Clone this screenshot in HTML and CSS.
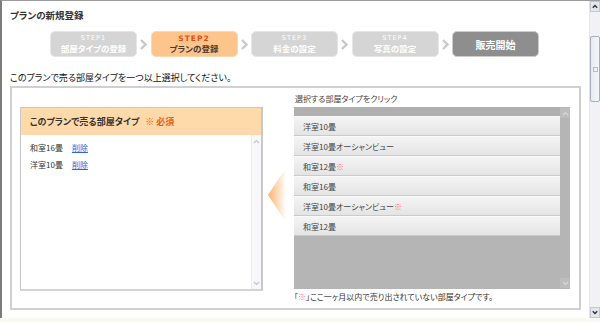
FILE: index.html
```html
<!DOCTYPE html>
<html lang="ja">
<head>
    <meta charset="UTF-8">
    <title>プランの新規登録</title>
    <link rel="stylesheet" href="styles.css">
</head>
<body>

    <div class="frame">
        <div class="page">
            <h1 class="title">プランの新規登録</h1>

            <ol class="steps">
                <li class="step">
                    <span class="step-no">STEP1</span>
                    <span class="step-name">部屋タイプの登録</span>
                </li>
                <li class="chev"><svg width="7" height="11" viewBox="0 0 7 11"><polyline points="1,1 5.5,5.5 1,10" fill="none" stroke="#c9c9c9" stroke-width="2.4"/></svg></li>
                <li class="step current">
                    <span class="step-no">STEP2</span>
                    <span class="step-name">プランの登録</span>
                </li>
                <li class="chev"><svg width="7" height="11" viewBox="0 0 7 11"><polyline points="1,1 5.5,5.5 1,10" fill="none" stroke="#c9c9c9" stroke-width="2.4"/></svg></li>
                <li class="step">
                    <span class="step-no">STEP3</span>
                    <span class="step-name">料金の設定</span>
                </li>
                <li class="chev"><svg width="7" height="11" viewBox="0 0 7 11"><polyline points="1,1 5.5,5.5 1,10" fill="none" stroke="#c9c9c9" stroke-width="2.4"/></svg></li>
                <li class="step">
                    <span class="step-no">STEP4</span>
                    <span class="step-name">写真の設定</span>
                </li>
                <li class="chev"><svg width="7" height="11" viewBox="0 0 7 11"><polyline points="1,1 5.5,5.5 1,10" fill="none" stroke="#c9c9c9" stroke-width="2.4"/></svg></li>
                <li class="step final">
                    <span class="step-final">販売開始</span>
                </li>
            </ol>

            <p class="lead">このプランで売る部屋タイプを一つ以上選択してください。</p>

            <div class="picker">
                <div class="chosen">
                    <div class="chosen-head">このプランで売る部屋タイプ<span class="req">※ 必須</span></div>
                    <div class="chosen-body">
                        <ul class="chosen-list">
                            <li>和室16畳<a href="#">削除</a></li>
                            <li>洋室10畳<a href="#">削除</a></li>
                        </ul>
                        <div class="vscroll light">
                            <span class="vs-btn"><svg width="9" height="9" viewBox="0 0 9 9"><polyline points="2,6 4.5,3.5 7,6" fill="none" stroke="#c4c4cc" stroke-width="1.2"/></svg></span>
                            <span class="vs-btn"><svg width="9" height="9" viewBox="0 0 9 9"><polyline points="2,3 4.5,5.5 7,3" fill="none" stroke="#c4c4cc" stroke-width="1.2"/></svg></span>
                        </div>
                    </div>
                </div>

                <div class="pointer">
                    <svg width="18" height="54" viewBox="0 0 18 54">
                        <defs>
                            <linearGradient id="fade" x1="0" y1="0" x2="1" y2="0">
                                <stop offset="0" stop-color="#fbb26c"/>
                                <stop offset="1" stop-color="#ffffff"/>
                            </linearGradient>
                        </defs>
                        <polygon points="18,0 0,27 18,54" fill="url(#fade)"/>
                    </svg>
                </div>

                <div class="source">
                    <p class="source-label">選択する部屋タイプをクリック</p>
                    <div class="source-box">
                        <div class="source-main">
                            <div class="source-top"></div>
                            <ul class="source-list">
                                <li>洋室10畳</li>
                                <li>洋室10畳オーシャンビュー</li>
                                <li>和室12畳<span class="mark">※</span></li>
                                <li>和室16畳</li>
                                <li>洋室10畳オーシャンビュー<span class="mark">※</span></li>
                                <li>和室12畳</li>
                            </ul>
                        </div>
                        <div class="vscroll gray">
                            <span class="vs-btn"><svg width="9" height="9" viewBox="0 0 9 9"><polyline points="2,6 4.5,3.5 7,6" fill="none" stroke="#d8d8d8" stroke-width="1.2"/></svg></span>
                            <span class="vs-btn"><svg width="9" height="9" viewBox="0 0 9 9"><polyline points="2,3 4.5,5.5 7,3" fill="none" stroke="#d8d8d8" stroke-width="1.2"/></svg></span>
                        </div>
                    </div>
                    <p class="note">「<span class="mark">※</span>」ここ一ヶ月以内で売り出されていない部屋タイプです。</p>
                </div>
            </div>
        </div>

        <div class="page-scroll">
            <span class="ps-btn"><svg width="9" height="9" viewBox="0 0 9 9"><polyline points="2,6 4.5,3.5 7,6" fill="none" stroke="#333" stroke-width="1.6"/></svg></span>
            <span class="ps-thumb"><span class="grip"></span></span>
            <span class="ps-btn"><svg width="9" height="9" viewBox="0 0 9 9"><polyline points="2,3 4.5,5.5 7,3" fill="none" stroke="#333" stroke-width="1.6"/></svg></span>
        </div>
    </div>

</body>
</html>
```

FILE: styles.css
```css
* {
    box-sizing: border-box;
}
body {
    margin: 0;
    font-family: "Noto Sans CJK JP", "Liberation Sans", sans-serif;
    font-feature-settings: "palt";
    background-color: #f9f9f1;
    color: #333;
}
.frame {
    display: flex;
    height: 318px;
    border-top: 1px solid #9c9c9c;
    border-left: 2px solid #7c7c7c;
    background-color: #fff;
}
.page {
    flex: 1;
    padding: 7px 8px 0;
}
.title {
    margin: 0;
    font-size: 9.5px;
    line-height: 14px;
    font-weight: bold;
    color: #333;
}

/* step bar */
.steps {
    display: flex;
    list-style: none;
    margin: 9px 0 0 40px;
    padding: 0;
}
.step {
    width: 87px;
    height: 26px;
    display: flex;
    flex-direction: column;
    align-items: center;
    justify-content: center;
    border: 1px solid #e6e6e6;
    border-radius: 5px;
    background-color: #d5d5d5;
    color: #fff;
}
.step-no {
    font-family: "DejaVu Sans", sans-serif;
    font-size: 6.5px;
    line-height: 9px;
    letter-spacing: 1px;
}
.step-name {
    font-size: 8.5px;
    line-height: 11px;
    font-weight: bold;
}
.step.current {
    background-color: #fdc48c;
    border-color: #fbd8b0;
    color: #4a3a2a;
}
.step.current .step-no {
    color: #e0501a;
    font-weight: bold;
    font-size: 7.5px;
}
.step.final {
    background-color: #8e8e8e;
    border-color: #cdcdcd;
}
.step-final {
    font-size: 10px;
    font-weight: bold;
}
.chev {
    width: 13.5px;
    display: flex;
    align-items: center;
    justify-content: center;
}

.lead {
    margin: 15px 0 0;
    font-size: 9px;
    line-height: 12px;
    color: #111;
}

/* picker */
.picker {
    display: grid;
    grid-template-columns: 243px 31px 276px;
    align-items: start;
    height: 224px;
    margin-top: 2px;
    padding: 5px 8px 0;
    border: 2px solid #d0d0d0;
}
.chosen {
    height: 184px;
    margin-top: 14px;
    display: flex;
    flex-direction: column;
    border: 1px solid #c8c8c8;
    border-right-width: 2px;
    border-bottom: 2px solid #d4d4d4;
}
.chosen-head {
    height: 27px;
    padding-left: 9px;
    background-color: #fed9aa;
    font-size: 9px;
    font-weight: bold;
    line-height: 27px;
    color: #333;
}
.req {
    margin-left: 6px;
    color: #e8601a;
}
.chosen-body {
    flex: 1;
    display: flex;
}
.chosen-list {
    flex: 1;
    list-style: none;
    margin: 0;
    padding: 4px 0 0 9px;
    font-size: 8px;
    line-height: 17px;
    color: #333;
}
.chosen-list a {
    margin-left: 9px;
    color: #2a6ad0;
}

.vscroll {
    width: 10px;
    display: flex;
    flex-direction: column;
    justify-content: space-between;
    padding: 1px 0;
}
.vscroll.light {
    background-color: #f8f8fa;
    border-left: 1px solid #ececf0;
}
.vscroll.gray {
    background-color: #b5b5b5;
}
.vs-btn {
    height: 10px;
    display: flex;
    align-items: center;
    justify-content: center;
}
.vscroll.gray .vs-btn {
    background-color: #bdbdbd;
}

.pointer {
    margin: 75px 0 0 5px;
    line-height: 0;
}

.source-label {
    margin: 0 0 2px 1px;
    font-size: 8px;
    line-height: 12px;
    color: #444;
}
.source-box {
    height: 182px;
    display: flex;
    background-color: #b5b5b5;
}
.source-main {
    flex: 1;
}
.source-top {
    height: 9px;
    background-color: #b0b0b0;
}
.source-list {
    list-style: none;
    margin: 0;
    padding: 0;
}
.source-list li {
    height: 20px;
    padding-left: 9px;
    font-size: 8px;
    line-height: 19px;
    color: #444;
    background: linear-gradient(#f4f4f4, #e4e4e4);
    border-top: 1px solid #fafafa;
    border-bottom: 1px solid #cacaca;
}
.mark {
    color: #f07a3a;
}
.note {
    margin: 2px 0 0;
    font-size: 8px;
    line-height: 12px;
    color: #333;
}

/* window scrollbar */
.page-scroll {
    width: 11px;
    display: flex;
    flex-direction: column;
    background-color: #f2f2f6;
    border-left: 1px solid #e4e4ea;
}
.ps-btn {
    height: 11px;
    display: flex;
    align-items: center;
    justify-content: center;
    background-color: #e4e6ee;
    border: 1px solid #c4c8d4;
}
.ps-btn:last-child {
    margin-top: auto;
}
.ps-thumb {
    height: 66px;
    margin-top: 24px;
    display: flex;
    align-items: center;
    justify-content: center;
    background: linear-gradient(90deg, #e8eaf2, #f6f6fa);
    border: 1px solid #a8acbc;
    border-radius: 2px;
}
.grip {
    width: 5px;
    height: 5px;
    border: 1px solid #b8bccc;
}
```
